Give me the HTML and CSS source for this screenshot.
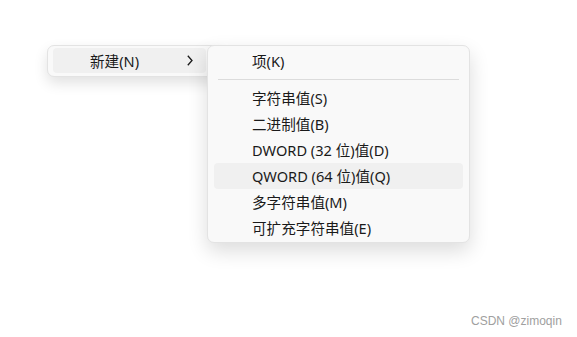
FILE: index.html
```html
<!DOCTYPE html>
<html lang="zh-CN">
<head>
    <meta charset="UTF-8">
    <title>新建菜单</title>
    <link rel="stylesheet" href="styles.css">
</head>
<body>
    <div class="menu menu-main">
        <div class="item active">
            <span class="label">新建(N)</span>
            <svg class="chevron" width="6" height="11" viewBox="0 0 6 11">
                <path d="M0.8 0.8 L5 5.5 L0.8 10.2" fill="none" stroke="#1a1a1a" stroke-width="1.3"/>
            </svg>
        </div>
    </div>

    <div class="menu menu-sub">
        <div class="item">项(K)</div>
        <div class="separator"></div>
        <div class="item">字符串值(S)</div>
        <div class="item">二进制值(B)</div>
        <div class="item">DWORD (32 位)值(D)</div>
        <div class="item hover">QWORD (64 位)值(Q)</div>
        <div class="item">多字符串值(M)</div>
        <div class="item">可扩充字符串值(E)</div>
    </div>

    <div class="watermark">CSDN @zimoqin</div>
</body>
</html>
```

FILE: styles.css
```css
body {
    margin: 0;
    width: 577px;
    height: 337px;
    position: relative;
    background: #fff;
    font-family: "Noto Sans", "Noto Sans CJK SC", sans-serif;
    font-size: 14.6px;
    color: #1a1a1a;
    overflow: hidden;
}
.menu {
    position: absolute;
    background: #f9f9f9;
    border: 1px solid #e3e3e3;
    border-radius: 7px;
    box-sizing: border-box;
}
.menu-main {
    left: 47px;
    top: 45px;
    width: 175px;
    height: 32px;
    padding: 2px 5px;
    box-shadow: 0 6px 14px rgba(0,0,0,0.12);
}
.menu-main .item {
    height: 25px;
    width: 153px;
    padding-left: 37px;
    padding-right: 13px;
    display: flex;
    align-items: center;
    justify-content: space-between;
    box-sizing: border-box;
    border-radius: 4px;
}
.menu-sub {
    left: 207px;
    top: 45px;
    width: 263px;
    height: 198px;
    padding: 2px 6px;
    box-shadow: 0 8px 20px rgba(0,0,0,0.14);
}
.item {
    height: 26px;
    line-height: 26px;
    padding-left: 38px;
    border-radius: 4px;
    white-space: nowrap;
}
.active, .hover {
    background: #f0f0f0;
}
.separator {
    height: 1px;
    background: #dcdcdc;
    margin: 5px 4px 5px 4px;
}
.chevron {
    display: block;
}
.watermark {
    position: absolute;
    left: 471px;
    top: 314px;
    font-family: "Liberation Sans", Arial, sans-serif;
    font-size: 12px;
    color: #a0a0a0;
}
```
